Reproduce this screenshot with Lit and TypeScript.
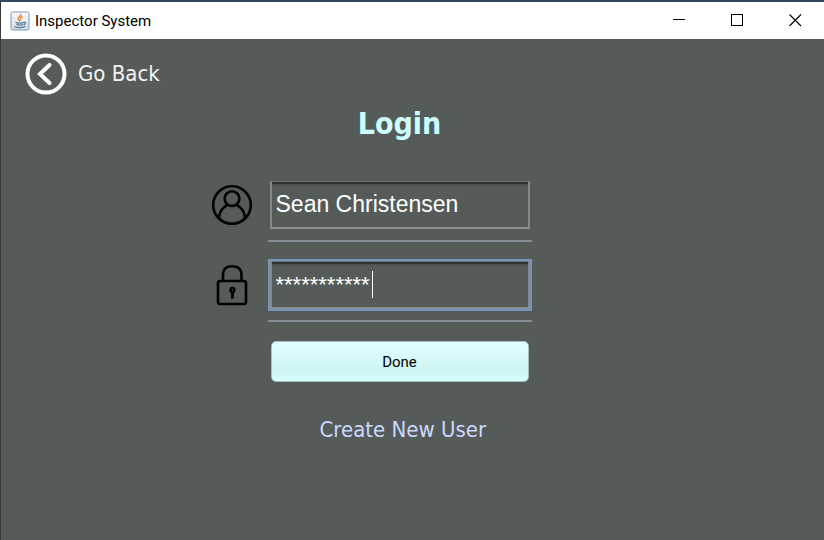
import { LitElement, html, css, svg } from "lit";
import { customElement, state } from "lit/decorators.js";

const userIcon = svg`
  <svg class="icon" viewBox="0 0 42 42" aria-hidden="true">
    <g fill="none" stroke="#000" stroke-width="2.6" stroke-linecap="round">
      <circle cx="21" cy="21" r="18.8" />
      <circle cx="21" cy="14.6" r="7.4" />
      <path d="M8 34.500C8 29 11 24 16.200 20.800M34 34.500C34 29 31 24 25.800 20.800" />
    </g>
  </svg>`;

const lockIcon = svg`
  <svg class="icon" viewBox="0 0 42 42" aria-hidden="true">
    <rect x="7" y="17" width="28" height="23" rx="2" fill="none" stroke="#000" stroke-width="2.6" />
    <path d="M12 17V11C12 5 15 2.3 21 2.3S30.500 5 30.500 11V17" fill="none" stroke="#000" stroke-width="2.6" />
    <circle cx="21.500" cy="26" r="3.200" />
    <path d="M20 27H23V34.500H20Z" />
    <circle cx="21.500" cy="26" r=".7" fill="#555b58" />
  </svg>`;

@customElement("title-bar")
class TitleBar extends LitElement {
  static styles = css`
    :host {
      display: flex;
      align-items: center;
      height: 37px;
      background: #fff;
      color: #000;
      font: 15px/20px Roboto, "Noto Sans", sans-serif;
    }
    .logo { width: 20px; height: 20px; margin: 0 5px 0 9px; flex: none; }
    .name { flex: 1; }
    button {
      width: 46px;
      height: 37px;
      margin-right: 12px;
      padding: 0;
      border: 0;
      background: none;
      display: grid;
      place-items: center;
    }
    button:last-child { margin-right: 6px; }
    button svg { width: 13px; height: 13px; fill: none; stroke: #000; display: block; }
  `;

  render() {
    return html`
      <svg class="logo" viewBox="0 0 20 20" aria-hidden="true">
        <defs>
          <linearGradient id="tile" x1="0" y1="0" x2="0" y2="1">
            <stop offset="0" stop-color="#fafbfc" />
            <stop offset="1" stop-color="#d3dce4" />
          </linearGradient>
        </defs>
        <rect x="1" y="1" width="18" height="18" rx="1.5" fill="url(#tile)" stroke="#7b98b1" />
        <path d="M11 3C11.500 5.500 7 6 8.200 8.200L9.700 10.400M12.500 5.500C10.500 6.500 9.700 7.500 11 9.200" fill="none" stroke="#e98b42" stroke-width="1.5" />
        <path d="M5.500 11.300C7 12.300 12 12.300 14 11.200M6.500 13.300C8 14.200 11 14.200 12.800 13.200M14 11.300C16.500 11 16 13 13.500 14M4.500 15.500C7 17 13 17 15.500 15.300" fill="none" stroke="#557c9c" stroke-width="1.3" />
      </svg>
      <span class="name">Inspector System</span>
      <button type="button" aria-label="Minimize">
        <svg viewBox="0 0 13 13"><path d="M0 5.500H12" /></svg>
      </button>
      <button type="button" aria-label="Maximize">
        <svg viewBox="0 0 13 13"><rect x=".5" y=".5" width="11" height="11" /></svg>
      </button>
      <button type="button" aria-label="Close">
        <svg viewBox="0 0 13 13"><path d="M.5 .5L12 12M12 .5L.5 12" stroke-width="1.1" /></svg>
      </button>
    `;
  }
}

@customElement("app-root")
class AppRoot extends LitElement {
  static styles = css`
    :host {
      display: flex;
      flex-direction: column;
      box-sizing: border-box;
      min-height: 100vh;
      border-top: 2px solid #34495f;
      border-left: 1px solid #35383f;
      background: #555b58;
      color: #f2f2f2;
      font-family: "DejaVu Sans Condensed", "DejaVu Sans", sans-serif;
      font-stretch: condensed;
    }
    * { box-sizing: border-box; }
    main { padding: 14px 24px 24px; }
    .back {
      display: inline-flex;
      align-items: center;
      gap: 11px;
      padding: 0;
      border: 0;
      background: none;
      color: inherit;
      font-family: inherit;
      font-stretch: condensed;
      font-size: 22px;
      line-height: 42px;
    }
    .back svg { width: 42px; height: 42px; display: block; }
    form {
      display: grid;
      grid-template-columns: 1fr 264px 1fr;
      column-gap: 15px;
      margin-right: 26px;
    }
    h1 {
      grid-column: 2;
      margin: 5px 0 37px;
      text-align: center;
      color: #ccffff;
      font-size: 30px;
      line-height: 40px;
      font-weight: bold;
    }
    label { grid-column: 1; justify-self: end; height: 48px; display: flex; align-items: center; }
    .icon { width: 42px; height: 42px; display: block; }
    .cell {
      grid-column: 2;
      position: relative;
      height: 61px;
      margin-bottom: 19px;
      padding: 0 2px;
      border-bottom: 2px solid #878e93;
      font: 23px/26px "Liberation Sans", Arial, sans-serif;
    }
    input {
      display: block;
      width: 100%;
      height: 48px;
      padding: 0 4px;
      border: 2px solid;
      border-width: 1px 2px 2px;
      border-color: #6f7372 #858988 #8f9291;
      background: linear-gradient(#303332 0 2px, #4a4f4d 2px 3px, #555b58 4px);
      color: #fff;
      font: inherit;
      outline: none;
    }
    .active { font-size: 22px; }
    .active input { box-shadow: 0 0 0 2px #7396bb; }
    .caret {
      position: absolute;
      top: 10px;
      left: 8px;
      height: 27px;
      border-right: 1px solid #fff;
      pointer-events: none;
    }
    .done {
      grid-column: 2;
      height: 41px;
      margin: 0 3px;
      padding: 0;
      border: 1px solid #a9bebe;
      border-radius: 5px;
      background: linear-gradient(#e1ffff, #cef5f5 75%, #d8ffff);
      color: #000;
      font: 15px/20px Roboto, "Noto Sans", sans-serif;
    }
    .create {
      grid-column: 2;
      justify-self: start;
      margin-top: 33px;
      padding-left: 52px;
      color: #ccd9ff;
      text-decoration: none;
      font-size: 22px;
      line-height: 30px;
    }
  `;

  @state() private user = "Sean Christensen";
  @state() private mask = "***********";

  render() {
    const caretOffset = Math.round(this.mask.length * 22 * 0.39) + 3;
    return html`
      <title-bar></title-bar>
      <main>
        <button class="back" type="button">
          <svg viewBox="0 0 42 42" fill="none" stroke="#fff" aria-hidden="true">
            <circle cx="21" cy="21" r="18.500" stroke-width="4" />
            <path d="M24.500 12L15 21L24.500 30" stroke-width="4" stroke-linecap="round" />
          </svg>
          Go Back
        </button>
        <form @submit=${(e: Event) => e.preventDefault()}>
          <h1>Login</h1>
          <label for="user" aria-label="User name">${userIcon}</label>
          <div class="cell">
            <input id="user" type="text" autocomplete="off" spellcheck="false" .value=${this.user} />
          </div>
          <label for="pass" aria-label="Password">${lockIcon}</label>
          <div class="cell active">
            <input id="pass" type="text" autocomplete="off" spellcheck="false" .value=${this.mask} />
            <span class="caret" style="width:${caretOffset}px" aria-hidden="true"></span>
          </div>
          <button class="done" type="submit">Done</button>
          <a class="create" href="#create">Create New User</a>
        </form>
      </main>
    `;
  }
}
